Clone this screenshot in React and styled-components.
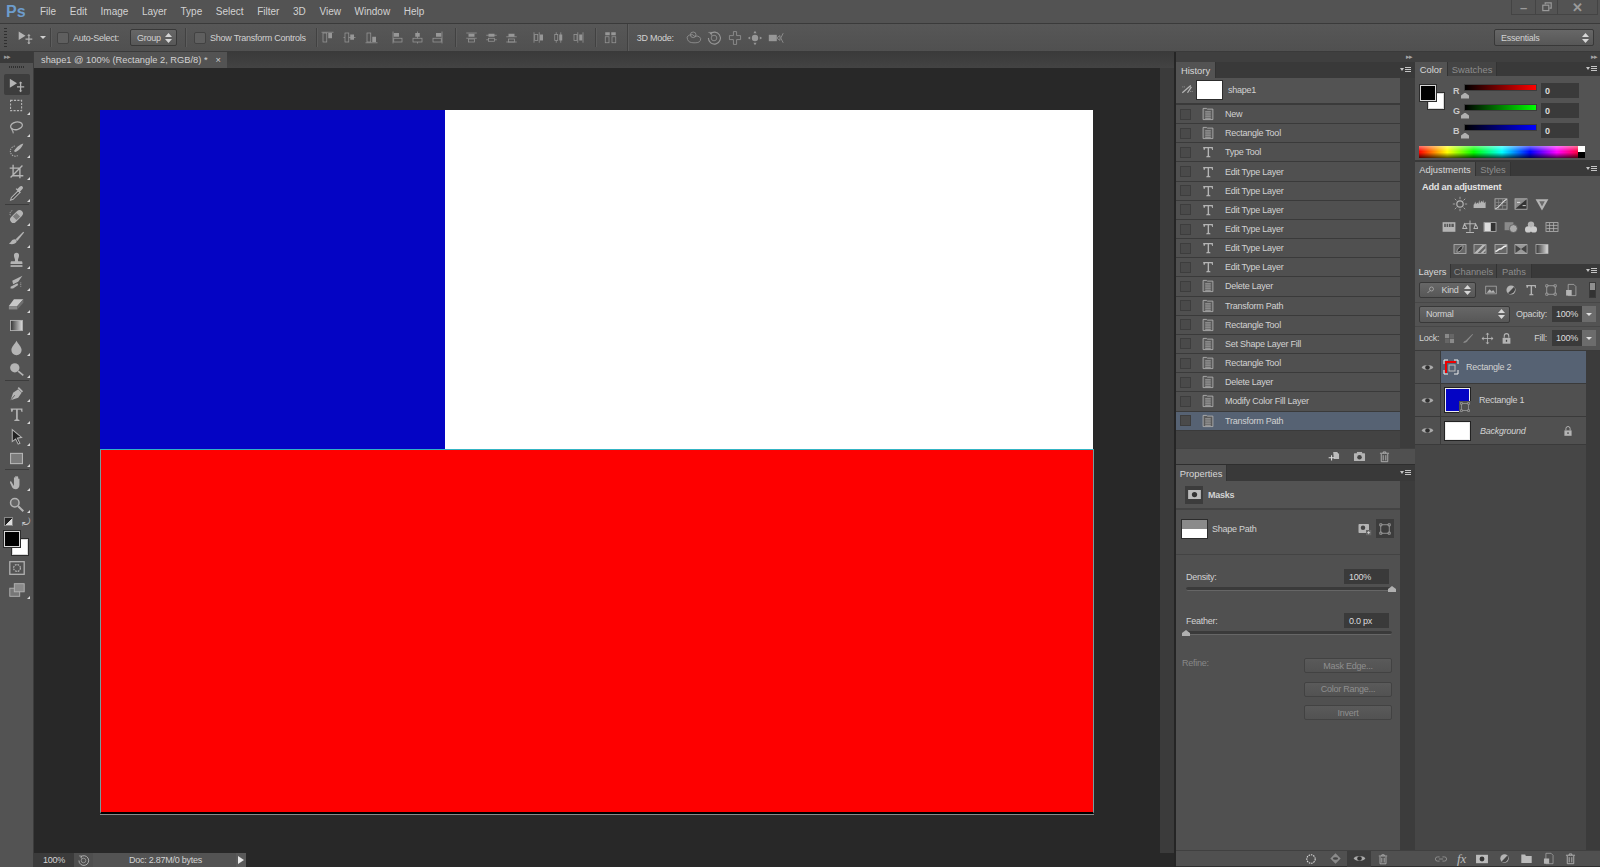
import React from 'react';
import styled, { createGlobalStyle } from 'styled-components';

const GlobalStyle = createGlobalStyle`
  html, body { margin: 0; padding: 0; height: 100%; overflow: hidden; background: #282828; }
  body { font-family: "Liberation Sans", Arial, sans-serif; font-size: 9px; letter-spacing: -0.25px; color: #d2d2d2; }
  * { box-sizing: border-box; }
`;

const S = '#b4b4b4';

// drawings, all on a 20x20 grid
const ICONS = {
  move: <><path d="M2 3l8 5-8 5z" fill={S} /><path d="M14 7v10M10 12h8" stroke={S} strokeWidth="1.4" fill="none" /><path d="M14 6l2 2h-4zM14 18l2-2h-4z" fill={S} /></>,
  marquee: <rect x="3" y="4" width="13" height="12" fill="none" stroke={S} strokeWidth="1.3" strokeDasharray="2.5 1.5" />,
  lasso: <><ellipse cx="10" cy="8" rx="7" ry="4.5" transform="rotate(-12 10 8)" fill="none" stroke={S} strokeWidth="1.5" /><path d="M5 11c-2 3 2 2 1 6" fill="none" stroke={S} strokeWidth="1.3" /></>,
  quick: <><path d="M8 6a6 6 0 1 0 4 11" fill="none" stroke={S} strokeWidth="1.2" strokeDasharray="1.5 1.2" /><path d="M7 12c2-4 7-8 11-9-1 4-5 8-9 10z" fill={S} /></>,
  crop: <path d="M6 2v13h12M2 6h12v12M3 17L17 3" fill="none" stroke={S} strokeWidth="1.6" />,
  dropper: <><path d="M4 16l8-8 2 2-8 8-3 1z" fill="#444" stroke={S} strokeWidth="1.2" /><path d="M11 6l3-3c2-2 5 1 3 3l-3 3 1 1-1 1-5-5 1-1z" fill={S} /></>,
  heal: <><g transform="rotate(-45 10 10)"><rect x="1" y="6" width="18" height="8" rx="4" fill={S} /><rect x="7" y="7" width="6" height="6" fill="#7c7c7c" /></g><path d="M5 3a4 4 0 0 0-2 6" fill="none" stroke={S} strokeDasharray="1.5 1" /></>,
  brush: <><path d="M9 11L18 2l1 1-8 10z" fill={S} /><path d="M8 11c3 0 3 4 0 5-2 1-5 1-7 0 3-1 3-5 7-5z" fill={S} /></>,
  stamp: <><path d="M7 4a3 3 0 0 1 6 0c0 3-2 4-1 7h4c1 0 1 2 1 3H3c0-1 0-3 1-3h4c1-3-1-4-1-7z" fill={S} /><rect x="3" y="15.5" width="14" height="2" fill={S} /></>,
  histbrush: <><path d="M5 8l12-6-5 7-6 3z" fill={S} /><path d="M3 15l8-4 1 2-6 4H3z" fill={S} /><path d="M15 10v6" stroke={S} strokeDasharray="1 1" /></>,
  eraser: <><path d="M7 5h11l-7 8H1z" fill="#c8c8c8" /><path d="M1 13h10v4H1z" fill="#8a8a8a" /><path d="M11 13l7-8v4l-7 8z" fill="#6f6f6f" /></>,
  gradient: <><defs><linearGradient id="gr"><stop offset="0" stopColor="#333" /><stop offset="1" stopColor="#ddd" /></linearGradient></defs><rect x="3" y="4" width="14" height="12" fill="url(#gr)" stroke={S} /></>,
  blur: <path d="M10 2c2 4 6 7 6 11a6 6 0 0 1-12 0c0-4 4-7 6-11z" fill={S} />,
  dodge: <><circle cx="8" cy="8" r="5.5" fill={S} /><path d="M12 12l6 5" stroke={S} strokeWidth="2" /></>,
  pen: <><path d="M3 18l3-9 6-4 4 4-4 6z" fill={S} /><path d="M12 3l5 5" stroke={S} strokeWidth="2" /><path d="M3 18l5-6" stroke="#555" /></>,
  type: <path d="M3 3h14v4h-1l-1-2.5h-3.5V15.500l2 1v1H7.500v-1l2-1V4.500H6L5 7H4z" fill={S} />,
  pathsel: <path d="M5 2l11 9-5 1 3 6-2 1-3-6-4 3z" fill="#222" stroke={S} strokeWidth="1.2" />,
  shape: <rect x="3" y="4" width="14" height="12" fill="#7b7b7b" stroke={S} strokeWidth="1.3" />,
  hand: <path d="M4 9l3 5V4.500c0-1 1.500-1 1.500 0V9V3c0-1 1.800-1 1.800 0v6V3.500c0-1 1.700-1 1.700 0V10V6c0-1 1.500-1 1.500 0v7c0 3-2 5-4.500 5-2 0-3-.5-4-2L2.500 10.500C2 9 3 8 4 9z" fill={S} />,
  zoom: <><circle cx="8" cy="8" r="5" fill="#666" stroke={S} strokeWidth="1.8" /><path d="M12 12l6 6" stroke={S} strokeWidth="2.4" /></>,
  quickmask: <><rect x="2" y="3" width="16" height="14" fill="none" stroke={S} strokeWidth="1.4" /><circle cx="10" cy="10" r="3.8" fill="none" stroke={S} strokeWidth="1.3" strokeDasharray="2 1" /></>,
  screen: <><rect x="2" y="8" width="11" height="9" fill="#777" stroke={S} /><rect x="7" y="3" width="11" height="9" fill="#8a8a8a" stroke={S} /></>,
  doc: <><path d="M3 2h5l1 1h8v15H3z" fill="#5a5a5a" stroke={S} strokeWidth="1.2" /><path d="M6 7h8M6 10h8M6 13h8M6 16h8" stroke={S} strokeWidth="1.3" /></>,
  snapbrush: <><path d="M2 15L15 4M10 15l6-9" stroke={S} strokeWidth="2" fill="none" /><path d="M2 6l5 0M14 13l4 0" stroke={S} strokeDasharray="1.5 1" /></>,
  alignTop: <><path d="M2 3h16" stroke={S} /><rect x="4" y="4" width="5" height="12" fill="none" stroke={S} /><rect x="11" y="4" width="5" height="7" fill={S} /></>,
  alignMid: <><path d="M2 10h16" stroke={S} /><rect x="4" y="4" width="5" height="12" fill="#535353" stroke={S} /><rect x="11" y="6" width="5" height="7" fill={S} /></>,
  alignBot: <><path d="M2 17h16" stroke={S} /><rect x="4" y="4" width="5" height="12" fill="none" stroke={S} /><rect x="11" y="9" width="5" height="7" fill={S} /></>,
  alignL: <><path d="M4 2v16" stroke={S} /><rect x="5" y="4" width="7" height="5" fill={S} /><rect x="5" y="11" width="11" height="5" fill="none" stroke={S} /></>,
  alignC: <><path d="M10 2v16" stroke={S} /><rect x="7" y="4" width="6" height="5" fill={S} /><rect x="4" y="11" width="12" height="5" fill="#535353" stroke={S} /></>,
  alignR: <><path d="M16 2v16" stroke={S} /><rect x="8" y="4" width="7" height="5" fill={S} /><rect x="4" y="11" width="11" height="5" fill="none" stroke={S} /></>,
  distTop: <><path d="M3 4h14M3 11h14" stroke={S} /><rect x="6" y="5" width="8" height="4" fill={S} /><rect x="6" y="12" width="8" height="4" fill="none" stroke={S} /></>,
  distMid: <><path d="M3 7h14M3 13h14" stroke={S} /><rect x="6" y="5" width="8" height="4" fill={S} /><rect x="6" y="11" width="8" height="4" fill="#535353" stroke={S} /></>,
  distBot: <><path d="M3 9h14M3 16h14" stroke={S} /><rect x="6" y="5" width="8" height="4" fill={S} /><rect x="6" y="12" width="8" height="4" fill="none" stroke={S} /></>,
  distL: <><path d="M4 3v14M11 3v14" stroke={S} /><rect x="5" y="6" width="4" height="8" fill="none" stroke={S} /><rect x="12" y="6" width="4" height="8" fill={S} /></>,
  distC: <><path d="M7 3v14M13 3v14" stroke={S} /><rect x="5" y="6" width="4" height="8" fill="#535353" stroke={S} /><rect x="11" y="6" width="4" height="8" fill={S} /></>,
  distR: <><path d="M9 3v14M16 3v14" stroke={S} /><rect x="4" y="6" width="4" height="8" fill="none" stroke={S} /><rect x="11" y="6" width="4" height="8" fill={S} /></>,
  autoAlign: <><rect x="3" y="3" width="6" height="4" fill={S} /><rect x="11" y="3" width="6" height="4" fill={S} /><rect x="3" y="9" width="5" height="8" fill="none" stroke={S} /><rect x="12" y="9" width="5" height="8" fill="none" stroke={S} /></>,
  d3orbit: <><path d="M2 12a5 4 0 0 1 9-4 5 4 0 0 1 7 5c-1 3-5 3-8 3-4 0-7-1-8-4z" fill="none" stroke={S} /><circle cx="9" cy="6" r="3.5" fill="none" stroke={S} /></>,
  d3roll: <><path d="M5 5a7.500 7.500 0 1 1-2 5" fill="none" stroke={S} strokeWidth="1.4" /><circle cx="10" cy="10" r="3.5" fill="none" stroke={S} /><path d="M3 3h4v4" fill="none" stroke={S} /></>,
  d3pan: <path d="M8 2h4v5h5v5h-5v6H8v-6H3V7h5z" fill="none" stroke={S} />,
  d3slide: <><circle cx="10" cy="10" r="4" fill={S} /><path d="M10 1l2 3H8zM10 19l2-3H8zM1 10l3-2v4zM19 10l-3-2v4z" fill={S} /></>,
  d3cam: <><rect x="1" y="6" width="10" height="8" fill={S} /><path d="M12 9l3-2v6l-3-2zM19 4l-3 6 3 6" fill="none" stroke={S} /></>,
  sun: <><circle cx="10" cy="10" r="4" fill="none" stroke={S} strokeWidth="1.5" /><path d="M10 1v3M10 16v3M1 10h3M16 10h3M3.500 3.500l2 2M14.500 14.500l2 2M3.500 16.500l2-2M14.500 5.500l2-2" stroke={S} /></>,
  levels: <path d="M2 15V11l1-1 1-3 1 3 2-2 1 2 1-5 1 4 2-3 1 2 1-3 1 4 2-2v8z" fill={S} />,
  curves: <><rect x="2.5" y="3.5" width="15" height="13" fill="#555" stroke={S} /><path d="M7 4v12M12 4v12M3 8h14M3 12h14" stroke="#888" /><path d="M3 16C9 14 11 7 17 4" stroke="#ddd" fill="none" strokeWidth="1.3" /></>,
  exposure: <><rect x="2.5" y="3.5" width="15" height="13" fill="#8a8a8a" stroke={S} /><path d="M3 16L17 4v12z" fill="#333" /><path d="M5 8h4M12 12h4" stroke="#eee" /></>,
  vibrance: <><path d="M2 4h16l-8 14z" fill={S} /><path d="M6.500 6.500h7L10 13z" fill="#6a6a6a" /></>,
  huesat: <><rect x="2" y="4" width="16" height="12" fill={S} /><path d="M4 6h2v4H4zM7 6h2v4H7zM10 6h2v4h-2zM13 6h3v4h-3z" fill="#555" /></>,
  balance: <path d="M10 2v14M5 17h10M3 6h14M3 6l-2 6h5zM17 6l-2 6h5z" fill="none" stroke={S} strokeWidth="1.3" />,
  bw: <><rect x="2.5" y="4.5" width="15" height="11" fill="#333" stroke={S} /><rect x="3" y="5" width="8" height="10" fill="#ddd" /></>,
  photo: <><rect x="2" y="4" width="11" height="10" fill="#8a8a8a" /><circle cx="13" cy="12" r="5" fill="#aaa" stroke="#555" /></>,
  mixer: <><circle cx="10" cy="7" r="4" fill={S} /><circle cx="6.5" cy="13" r="4" fill="#ccc" /><circle cx="13.5" cy="13" r="4" fill="#ccc" /></>,
  table: <><rect x="2.5" y="4.5" width="15" height="11" fill="none" stroke={S} /><path d="M3 8h14M3 12h14M7 5v10M12 5v10" stroke={S} /></>,
  invert: <><rect x="2.5" y="4.5" width="15" height="11" fill="#666" stroke={S} /><path d="M6 14c1-6 5-8 8-8-1 5-4 8-8 8z" fill="#333" stroke={S} /></>,
  poster: <><rect x="2.5" y="4.5" width="15" height="11" fill="#666" stroke={S} /><path d="M3 15L13 5h4L7 15zM11 15l6-6v3l-3 3z" fill="#bbb" /></>,
  thresh: <><rect x="2.5" y="4.5" width="15" height="11" fill="#666" stroke={S} /><path d="M3 13c3 0 3-3 6-3s2-3 8-4" fill="none" stroke="#eee" strokeWidth="2" /></>,
  selective: <><rect x="2.5" y="4.5" width="15" height="11" fill="#999" stroke={S} /><path d="M3 5l7 5-7 5zM17 5l-7 5 7 5z" fill="#444" /></>,
  gradmap: <rect x="2.5" y="4.5" width="15" height="11" fill="url(#gr)" stroke={S} />,
  search: <><circle cx="11" cy="8" r="4" fill="none" stroke={S} strokeWidth="1.4" /><path d="M8 11l-5 5" stroke={S} strokeWidth="1.6" /></>,
  image: <><rect x="2.5" y="4.5" width="15" height="11" fill="none" stroke={S} /><path d="M4 14l4-5 3 3 2-2 3 4z" fill={S} /></>,
  adjust: <><circle cx="10" cy="10" r="6.5" fill={S} /><path d="M14.500 5.500a6.500 6.500 0 0 1-9 9z" fill="#444" /></>,
  pathframe: <><rect x="4" y="4" width="12" height="12" fill="none" stroke={S} /><path d="M2.500 2.500h3v3h-3zM14.500 2.500h3v3h-3zM2.500 14.500h3v3h-3zM14.500 14.500h3v3h-3z" fill="#444" stroke={S} /></>,
  smart: <><path d="M6 2h8l3 3v13H6z" fill="none" stroke={S} /><rect x="3" y="10" width="8" height="8" fill={S} /></>,
  grid: <><rect x="3" y="3" width="6.5" height="6.5" fill="#8a8a8a" /><rect x="10.5" y="10.5" width="6.5" height="6.5" fill="#8a8a8a" /><rect x="10.5" y="3" width="6.5" height="6.5" fill="#666" /><rect x="3" y="10.5" width="6.5" height="6.5" fill="#666" /></>,
  lockbrush: <path d="M2 17c1-4 4-3 5-5l9-9 1 1-8 9c-1 2-3 4-7 4z" fill="#8a8a8a" />,
  lockmove: <><path d="M10 2v16M2 10h16" stroke={S} strokeWidth="1.3" /><path d="M10 1l3 3H7zM10 19l3-3H7zM1 10l3-3v6zM19 10l-3-3v6z" fill={S} /></>,
  lock: <><rect x="4" y="9" width="12" height="9" fill={S} /><path d="M6.500 9V6a3.500 3.500 0 0 1 7 0v3" fill="none" stroke={S} strokeWidth="1.6" /><rect x="9" y="12" width="2" height="3" fill="#444" /></>,
  eye: <><path d="M1 10c3-5 15-5 18 0-3 5-15 5-18 0z" fill="#aaa" /><circle cx="10" cy="10" r="3.5" fill="#2e2e2e" /></>,
  newdoc: <><path d="M8 3h9v11H9" fill="#bbb" /><path d="M1 12h9M5.500 8v8" stroke="#ddd" strokeWidth="1.6" /><path d="M14 3h3v3z" fill="#444" /></>,
  camera: <><rect x="1.5" y="5" width="17" height="12" rx="1" fill={S} /><rect x="6" y="3" width="8" height="3" fill={S} /><circle cx="10" cy="11" r="3.5" fill="#444" /></>,
  trash: <path d="M3 5h14M8 5V3h4v2M5 6v12h10V6M8 8v8M12 8v8" fill="none" stroke={S} strokeWidth="1.4" />,
  maskadd: <><rect x="2" y="4" width="14" height="12" rx="1" fill={S} /><circle cx="8" cy="9" r="3" fill="#444" /><rect x="12" y="12" width="7" height="7" fill="#666" /><path d="M13.500 15.500h4M15.500 13.500v4" stroke="#ddd" /></>,
  mask: <><rect x="1.5" y="4" width="17" height="12" fill="#bbb" /><circle cx="10" cy="10" r="3.5" fill="#333" /></>,
  dashcircle: <circle cx="10" cy="10" r="7" fill="none" stroke="#ddd" strokeWidth="1.8" strokeDasharray="2.5 1.5" />,
  diamondeye: <><path d="M10 2l8 8-8 8-8-8z" fill="#8a8a8a" /><ellipse cx="10" cy="10" rx="4" ry="2" fill="#444" /></>,
  link: <path d="M8 7H5a3 3 0 0 0 0 6h3M12 7h3a3 3 0 0 1 0 6h-3M7 10h6" fill="none" stroke="#8c8c8c" strokeWidth="1.4" />,
  folder: <path d="M2 4h6l1 2h9v11H2z" fill="#bbb" />,
  restore: <><rect x="3" y="7" width="10" height="9" fill="none" stroke="#9a9a9a" strokeWidth="2" /><path d="M7 6V3h10v9h-3" fill="none" stroke="#9a9a9a" strokeWidth="2" /></>,
};

const IconSvg = styled.svg`
  display: block;
  flex: none;
`;

const Icon = ({ name, size = 16, className }) => (
  <IconSvg viewBox="0 0 20 20" width={size} height={size} className={className}>{ICONS[name]}</IconSvg>
);

const Page = styled.div`
  width: 1600px;
  height: 867px;
  display: flex;
  flex-direction: column;
  background: #535353;
  overflow: hidden;
`;

const Spacer = styled.span`
  flex: none;
  width: ${p => p.$w}px;
`;

const Grow = styled.div`
  flex: 1;
`;

/* ---------- title + options ---------- */

const MenuBar = styled.div`
  height: 24px;
  flex: none;
  display: flex;
  align-items: center;
  background: #535353;
  border-bottom: 1px solid #3a3a3a;
`;

const Logo = styled.div`
  width: 40px;
  padding-left: 6px;
  font-size: 16px;
  font-weight: 700;
  letter-spacing: 0;
  color: #6d9ccc;
  line-height: 22px;
`;

const MenuList = styled.div`
  display: flex;
  gap: 13.6px;
  flex: 1;
  font-size: 10px;
  letter-spacing: 0;
`;

const WinButtons = styled.div`
  align-self: flex-start;
  display: flex;
  height: 15px;
  margin-right: 2px;
  border: 1px solid #444;
  border-top: 0;
`;

const WinButton = styled.div`
  width: ${p => p.$w}px;
  display: flex;
  align-items: center;
  justify-content: center;
  color: #9a9a9a;
  font-size: 13px;
  font-weight: 700;
  & + & { border-left: 1px solid #444; }
`;

const OptionsBar = styled.div`
  height: 28px;
  flex: none;
  display: flex;
  align-items: center;
  background: linear-gradient(#575757, #505050);
  border-bottom: 1px solid #3a3a3a;
`;

const Grip = styled.div`
  width: 3px;
  height: 19px;
  margin: 0 10px 0 4px;
  background: repeating-linear-gradient(#2f2f2f 0 1px, transparent 1px 3px);
`;

const Caret = styled.div`
  width: 0;
  height: 0;
  border: 3px solid transparent;
  border-top: 3px solid #cfcfcf;
  border-bottom: 0;
  margin-right: 4px;
`;

const Sep = styled.div`
  width: 1px;
  height: ${p => p.$h || 19}px;
  background: #414141;
  box-shadow: 1px 0 #5d5d5d;
  margin: 0 ${p => p.$r}px 0 ${p => p.$l}px;
`;

const Check = styled.div`
  width: 12px;
  height: 12px;
  flex: none;
  border-radius: 2px;
  background: #5f5f5f;
  border: 1px solid #424242;
  margin-right: 4px;
`;

const Select = styled.div`
  width: ${p => p.$w}px;
  height: ${p => p.$h || 17}px;
  flex: none;
  display: flex;
  align-items: center;
  justify-content: space-between;
  padding: 0 4px 0 6px;
  border: 1px solid #383838;
  border-radius: 2px;
  background: linear-gradient(#676767, #575757);
  margin: ${p => p.$m || 0};
`;

const Updown = () => (
  <svg width="7" height="10" viewBox="0 0 7 10"><path d="M3.5 0L7 4H0zM3.5 10L0 6h7z" fill="#d6d6d6" /></svg>
);

const OptIcon = styled(Icon)`
  margin-right: ${p => p.$r ?? 4}px;
  opacity: ${p => p.$dim ? 0.7 : 1};
`;

/* ---------- main area ---------- */

const Main = styled.div`
  flex: 1;
  display: flex;
  min-height: 0;
`;

const Tools = styled.div`
  width: 34px;
  flex: none;
  background: #535353;
  border-right: 1px solid #3c3c3c;
  display: flex;
  flex-direction: column;
  align-items: center;
`;

const ToolsHead = styled.div`
  width: 100%;
  height: 11px;
  background: #3a3a3a;
  color: #9a9a9a;
  font-size: 7px;
  line-height: 10px;
  padding-left: 4px;
  letter-spacing: -1px;
`;

const ToolGrip = styled.div`
  width: 16px;
  height: 2px;
  margin: 3px 0 6px;
  background: repeating-linear-gradient(90deg, #2f2f2f 0 1px, transparent 1px 2px);
`;

const Tool = styled.div`
  width: 26px;
  height: ${p => p.$active ? 21 : 21.75}px;
  flex: none;
  position: relative;
  display: flex;
  align-items: center;
  justify-content: center;
  border-radius: 2px;
  background: ${p => p.$active ? '#3d3d3d' : 'transparent'};
  &::after {
    content: '';
    display: ${p => p.$active || p.$plain ? 'none' : 'block'};
    position: absolute;
    right: 0;
    bottom: 2px;
    border-left: 3px solid transparent;
    border-bottom: 3px solid #d8d8d8;
  }
`;

const ToolSep = styled.div`
  width: 24px;
  height: 1px;
  margin: 0 0 1.25px;
  background: #3c3c3c;
  flex: none;
`;

const MiniColors = styled.div`
  width: 26px;
  display: flex;
  justify-content: space-between;
  margin-top: 2px;
  color: #c4c4c4;
  font-size: 10px;
  line-height: 10px;
`;

const ColorPair = styled.div`
  position: relative;
  width: ${p => p.$w}px;
  height: ${p => p.$h}px;
  flex: none;
  margin: ${p => p.$m};
`;

const Swatch = styled.div`
  position: absolute;
  width: 16px;
  height: 16px;
  left: ${p => p.$x}px;
  top: ${p => p.$y}px;
  background: ${p => p.$c};
  border: 1px solid #d8d8d8;
  outline: 1px solid #2c2c2c;
`;

const MiniSwatch = styled.div`
  width: 9px;
  height: 9px;
  background: linear-gradient(135deg, #222 50%, #ddd 50%);
  border: 1px solid #888;
`;

const Doc = styled.div`
  flex: 1;
  min-width: 0;
  display: flex;
  flex-direction: column;
  background: #282828;
`;

const TabStrip = styled.div`
  height: 16px;
  flex: none;
  background: linear-gradient(#3a3a3a, #434343);
`;

const DocTab = styled.div`
  width: 193px;
  height: 16px;
  display: flex;
  align-items: center;
  justify-content: space-between;
  padding: 0 6px 0 7px;
  background: #535353;
  font-size: 9.3px;
  letter-spacing: 0;
  white-space: nowrap;
`;

const CanvasRow = styled.div`
  flex: 1;
  min-height: 0;
  display: flex;
`;

const CanvasArea = styled.div`
  flex: 1;
  min-width: 0;
  padding: 42px 0 0 66px;
`;

const Scroll = styled.div`
  width: 14px;
  flex: none;
  background: #3b3b3b;
`;

const Artboard = styled.div`
  width: 994px;
  height: 704px;
  display: flex;
  flex-direction: column;
`;

const TopBand = styled.div`
  height: 339px;
  flex: none;
  display: flex;
`;

const Blue = styled.div`
  width: 345px;
  background: #0404c4;
`;

const White = styled.div`
  width: 648px;
  background: #fff;
`;

const Red = styled.div`
  flex: 1;
  background: #fe0000;
  border: 1px solid #7a9a9a;
  border-top-color: #34b4c4;
  border-bottom: 2px solid #000;
  box-shadow: 0 1px #8a8a8a;
`;

const Status = styled.div`
  height: 14px;
  flex: none;
  display: flex;
  align-items: center;
  background: #3b3b3b;
`;

const Zoom = styled.div`
  width: 40px;
  padding-left: 9px;
`;

const StatusIcon = styled.div`
  width: 19px;
  height: 14px;
  display: flex;
  align-items: center;
  justify-content: center;
  background: #4e4e4e;
`;

const DocInfo = styled.div`
  width: 143px;
  height: 14px;
  padding-left: 36px;
  line-height: 14px;
  background: #535353;
`;

const StatusNext = styled.div`
  width: 10px;
  height: 14px;
  display: flex;
  align-items: center;
  justify-content: center;
  background: #5a5a5a;
  &::before {
    content: '';
    border-left: 6px solid #e8e8e8;
    border-top: 4px solid transparent;
    border-bottom: 4px solid transparent;
  }
`;

const StatusFill = styled.div`
  flex: 1;
  height: 14px;
  background: #282828;
`;

/* ---------- panel docks ---------- */

const Dock = styled.div`
  width: ${p => p.$w}px;
  flex: none;
  display: flex;
  flex-direction: column;
  background: #3c3c3c;
  border-left: ${p => p.$line ? '2px solid #252525' : '0'};
`;

const DockHead = styled.div`
  height: 10px;
  flex: none;
  display: flex;
  justify-content: flex-end;
  align-items: center;
  padding-right: 3px;
  background: #3f3f3f;
  color: #a5a5a5;
  font-size: 7px;
  letter-spacing: -1px;
`;

const TabBar = styled.div`
  height: ${p => p.$h || 16}px;
  flex: none;
  display: flex;
  align-items: stretch;
  background: #393939;
  padding-top: ${p => p.$pt || 0}px;
`;

const Tab = styled.div`
  width: ${p => p.$w}px;
  display: flex;
  align-items: center;
  justify-content: center;
  font-size: 9.4px;
  letter-spacing: 0;
  color: ${p => p.$on ? '#d8d8d8' : '#8c8c8c'};
  background: ${p => p.$on ? '#535353' : '#444'};
  border-right: 1px solid #333;
`;

const PanelMenu = styled.div`
  margin-left: auto;
  width: 11px;
  margin-right: ${p => p.$r || 3}px;
  align-self: center;
  height: 6px;
  background: repeating-linear-gradient(#c4c4c4 0 1px, transparent 1px 2px) right / 6px 100% no-repeat;
  &::before {
    content: '';
    display: block;
    width: 0;
    border: 2px solid transparent;
    border-top: 3px solid #c4c4c4;
    margin-top: 1px;
  }
`;

const HistoryBody = styled.div`
  height: 370px;
  flex: none;
  width: 224px;
  display: flex;
  flex-direction: column;
  background: #434343;
`;

const Snapshot = styled.div`
  height: 27px;
  flex: none;
  display: flex;
  align-items: center;
  padding: 0 0 2px 5px;
  background: #535353;
  border-bottom: 2px solid #3a3a3a;
`;

const SnapThumb = styled.div`
  width: 27px;
  height: 20px;
  margin: 0 5px 0 2px;
  background: #fff;
  border: 1px solid #2c2c2c;
`;

const HistRow = styled.div`
  height: 19.17px;
  flex: none;
  display: flex;
  align-items: center;
  padding-left: 4px;
  border-bottom: 1px solid #3a3a3a;
  background: ${p => p.$on ? '#566273' : '#505050'};
`;

const RowCheck = styled.div`
  width: 11px;
  height: 11px;
  margin-right: 10px;
  background: #4a4a4a;
  border: 1px solid #3d3d3d;
`;

const RowIcon = styled(Icon)`
  margin-right: 10px;
`;

const PanelFoot = styled.div`
  height: 17px;
  flex: none;
  display: flex;
  align-items: center;
  justify-content: flex-end;
  gap: ${p => p.$gap ?? 13}px;
  padding-right: ${p => p.$r || 0}px;
  background: #505050;
  border-top: 1px solid #404040;
  border-bottom: 1px solid #2e2e2e;
`;

const FootCell = styled.div`
  width: 24px;
  height: 16px;
  display: flex;
  align-items: center;
  justify-content: center;
  background: ${p => p.$on ? '#3d3d3d' : 'transparent'};
`;

const Fx = styled.span`
  font-family: "Liberation Serif", serif;
  font-style: italic;
  font-size: 13px;
  color: #bbb;
`;

const PropBody = styled.div`
  flex: 1;
  min-height: 0;
  width: 224px;
  display: flex;
  flex-direction: column;
  background: #505050;
`;

const MaskHead = styled.div`
  height: 29px;
  flex: none;
  display: flex;
  align-items: center;
  gap: 5px;
  padding-left: 9px;
  border-bottom: 2px solid #434343;
  font-weight: 700;
  background: #535353;
`;

const MaskBtn = styled.div`
  width: 18px;
  height: 18px;
  display: flex;
  align-items: center;
  justify-content: center;
  background: #3c3c3c;
`;

const ShapeRow = styled.div`
  height: 45px;
  flex: none;
  display: flex;
  align-items: center;
  padding: 0 6px 7px 5px;
  border-bottom: 1px solid #434343;
`;

const MaskThumb = styled.div`
  width: 27px;
  height: 20px;
  margin-right: 4px;
  flex: none;
  border: 1px solid #2c2c2c;
  background: linear-gradient(#8a8a8a 50%, #fff 50%);
`;

const PathBtn = styled.div`
  width: 18px;
  height: 19px;
  margin-left: 4px;
  display: flex;
  align-items: center;
  justify-content: center;
  background: #3c3c3c;
`;

const FieldHead = styled.div`
  display: flex;
  align-items: center;
  justify-content: space-between;
  padding: 0 11px 0 10px;
  margin-top: ${p => p.$top}px;
`;

const ValueBox = styled.div`
  width: ${p => p.$w || 45}px;
  height: ${p => p.$h || 15}px;
  display: flex;
  align-items: center;
  justify-content: ${p => p.$end ? 'space-between' : 'flex-start'};
  padding-left: ${p => p.$pl || 5}px;
  background: #3a3a3a;
  color: #dcdcdc;
  flex: none;
`;

const Track = styled.div`
  position: relative;
  height: 4px;
  margin: 3px 8px 0 10px;
  background: #3a3a3a;
  border-bottom: 1px solid #666;
  border-radius: 2px;
`;

const Thumb = styled.div`
  position: absolute;
  top: ${p => p.$top ?? -2}px;
  ${p => p.$right ? 'right: -4px;' : 'left: -4px;'}
  width: 8px;
  height: 6px;
  background: #b0b0b0;
  clip-path: polygon(50% 0, 100% 50%, 100% 100%, 0 100%, 0 50%);
`;

const RefineRow = styled.div`
  display: flex;
  justify-content: space-between;
  padding: 0 8px 0 6px;
  margin-top: 23px;
  color: #888;
`;

const ButtonStack = styled.div`
  width: 88px;
  display: flex;
  flex-direction: column;
  gap: 8.5px;
`;

const DimButton = styled.div`
  height: 15px;
  display: flex;
  align-items: center;
  justify-content: center;
  color: #8f8f8f;
  background: linear-gradient(#5a5a5a, #525252);
  border: 1px solid #424242;
  border-radius: 2px;
`;

const ColorPanel = styled.div`
  height: 84px;
  flex: none;
  display: flex;
  flex-direction: column;
  background: #535353;
  padding: 7px 15px 0 5px;
`;

const ColorTop = styled.div`
  display: flex;
  height: 55px;
`;

const Sliders = styled.div`
  flex: 1;
  padding-left: 7px;
  display: flex;
  flex-direction: column;
  gap: 5px;
`;

const SliderRow = styled.div`
  height: 15px;
  display: flex;
  align-items: center;
  font-weight: 700;
  color: #c8c8c8;
`;

const Channel = styled.div`
  width: 12px;
  margin-top: 1px;
`;

const RampWrap = styled.div`
  position: relative;
  width: 71px;
  height: 5px;
  margin: -7px 5px 0 0;
  background: linear-gradient(90deg, #000, ${p => p.$c});
  outline: 1px solid #3d3d3d;
`;

const Spectrum = styled.div`
  position: relative;
  height: 12px;
  width: 166px;
  margin: 8px 0 0 -1px;
  background:
    linear-gradient(rgba(255, 255, 255, .45), rgba(255, 255, 255, 0) 45%, rgba(0, 0, 0, 0) 55%, rgba(0, 0, 0, .7)),
    linear-gradient(90deg, #f00, #ff0 17%, #0f0 33%, #0ff 50%, #00f 67%, #f0f 83%, #f00);
`;

const SpecEnds = styled.div`
  position: absolute;
  right: 0;
  top: 0;
  width: 7px;
  height: 12px;
  background: linear-gradient(#fff 50%, #000 50%);
`;

const AdjPanel = styled.div`
  height: 88px;
  flex: none;
  background: #535353;
  padding-top: 6px;
`;

const AdjTitle = styled.div`
  padding-left: 7px;
  font-weight: 700;
  font-size: 9.2px;
  letter-spacing: -0.2px;
  color: #e4e4e4;
  margin-bottom: 1px;
`;

const IconLine = styled.div`
  display: flex;
  justify-content: center;
  gap: 4.5px;
  height: 22.5px;
  align-items: center;
  padding-right: 14px;
`;

const LayersPanel = styled.div`
  flex: 1;
  min-height: 0;
  display: flex;
  flex-direction: column;
  background: #535353;
`;

const LayerTool = styled.div`
  height: 24px;
  flex: none;
  display: flex;
  align-items: center;
  padding: 0 4px 1px;
  border-top: ${p => p.$line ? '1px solid #474747' : '0'};
`;

const FilterToggle = styled.div`
  width: 7px;
  height: 16px;
  margin-left: auto;
  background: linear-gradient(#8f8f8f 50%, #333 50%);
  border: 1px solid #3a3a3a;
`;

const Stepper = styled.div`
  width: 14px;
  height: 16px;
  margin-left: auto;
  display: flex;
  align-items: center;
  justify-content: center;
  background: #6c6c6c;
  &::before {
    content: '';
    border: 3px solid transparent;
    border-top: 3px solid #e0e0e0;
    border-bottom: 0;
  }
`;

const LayerBody = styled.div`
  flex: 1;
  min-height: 0;
  display: flex;
  background: #3c3c3c;
  border-top: 1px solid #3a3a3a;
`;

const LayerList = styled.div`
  flex: 1;
  display: flex;
  flex-direction: column;
  background: #464646;
`;

const LayerRow = styled.div`
  height: ${p => p.$h}px;
  flex: none;
  display: flex;
  align-items: center;
  border-bottom: 1px solid #3a3a3a;
  background: ${p => p.$bg || '#505050'};
`;

const EyeCell = styled.div`
  width: 26px;
  align-self: stretch;
  flex: none;
  display: flex;
  align-items: center;
  justify-content: center;
  border-right: 1px solid #3a3a3a;
  background: #505050;
`;

const LayerThumb = styled.div`
  position: relative;
  width: ${p => p.$w}px;
  height: ${p => p.$h}px;
  flex: none;
  margin: 0 ${p => p.$r}px 0 ${p => p.$l}px;
  background: ${p => p.$c};
  border: ${p => p.$c === 'transparent' ? '0' : '1px solid #222'};
  outline: ${p => p.$c === 'transparent' ? '0' : '1px solid #eee'};
  outline-offset: -2px;
`;

const PathBadge = styled.div`
  position: absolute;
  right: -1px;
  bottom: -1px;
  width: 12px;
  height: 12px;
  background: #505050;
`;

const LayerName = styled.div`
  font-style: ${p => p.$it ? 'italic' : 'normal'};
`;

const LayerLock = styled(Icon)`
  margin-left: auto;
  margin-right: 12px;
`;

const HISTORY = [
  ['New', 'doc'], ['Rectangle Tool', 'doc'], ['Type Tool', 'type'],
  ['Edit Type Layer', 'type'], ['Edit Type Layer', 'type'], ['Edit Type Layer', 'type'],
  ['Edit Type Layer', 'type'], ['Edit Type Layer', 'type'], ['Edit Type Layer', 'type'],
  ['Delete Layer', 'doc'], ['Transform Path', 'doc'], ['Rectangle Tool', 'doc'],
  ['Set Shape Layer Fill', 'doc'], ['Rectangle Tool', 'doc'], ['Delete Layer', 'doc'],
  ['Modify Color Fill Layer', 'doc'], ['Transform Path', 'doc'],
];

const MENUS = ['File', 'Edit', 'Image', 'Layer', 'Type', 'Select', 'Filter', '3D', 'View', 'Window', 'Help'];

const TOOL_GROUPS = [
  ['marquee', 'lasso', 'quick', 'crop', 'dropper'],
  ['heal', 'brush', 'stamp', 'histbrush', 'eraser', 'gradient', 'blur', 'dodge'],
  ['pen', 'type', 'pathsel', 'shape'],
  ['hand', 'zoom'],
];

const Slider = ({ label, color }) => (
  <SliderRow>
    <Channel>{label}</Channel>
    <RampWrap $c={color}><Thumb $top={8} /></RampWrap>
    <ValueBox $w={38} $pl={4}>0</ValueBox>
  </SliderRow>
);

const App = () => (
  <Page>
    <GlobalStyle />
    <MenuBar>
      <Logo>Ps</Logo>
      <MenuList>{MENUS.map(m => <span key={m}>{m}</span>)}</MenuList>
      <WinButtons>
        <WinButton $w={23}>–</WinButton>
        <WinButton $w={22}><Icon name="restore" size={12} /></WinButton>
        <WinButton $w={40}>✕</WinButton>
      </WinButtons>
    </MenuBar>

    <OptionsBar>
      <Grip />
      <OptIcon name="move" size={17} $r={6} />
      <Caret />
      <Sep $l={0} $r={6} />
      <Check />
      <span>Auto-Select:</span>
      <Select $w={47} $m="0 8px 0 11px">Group<Updown /></Select>
      <Sep $l={0} $r={8} />
      <Check />
      <span>Show Transform Controls</span>
      <Sep $l={10} $r={3} />
      {['alignTop', 'alignMid', 'alignBot'].map(n => <OptIcon key={n} name={n} size={15} $r={7} $dim />)}
      <Spacer $w={4} />
      {['alignL', 'alignC', 'alignR'].map(n => <OptIcon key={n} name={n} size={15} $r={5} $dim />)}
      <Sep $l={5} $r={8} />
      {['distTop', 'distMid', 'distBot'].map(n => <OptIcon key={n} name={n} size={15} $r={5} $dim />)}
      <Spacer $w={7} />
      {['distL', 'distC', 'distR'].map(n => <OptIcon key={n} name={n} size={15} $r={5} $dim />)}
      <Sep $l={4} $r={7} />
      <OptIcon name="autoAlign" size={15} $r={8} $dim />
      <Sep $l={1} $r={9} $h={27} />
      <span>3D Mode:</span>
      <Spacer $w={12} />
      {['d3orbit', 'd3roll', 'd3pan', 'd3slide', 'd3cam'].map(n => <OptIcon key={n} name={n} size={16} $r={4.5} $dim />)}
      <Grow />
      <Select $w={100} $m="0 6px 0 0">Essentials<Updown /></Select>
    </OptionsBar>

    <Main>
      <Tools>
        <ToolsHead>▸▸</ToolsHead>
        <ToolGrip />
        <Tool $active><Icon name="move" size={18} /></Tool>
        {TOOL_GROUPS.map((group, i) => (
          <React.Fragment key={i}>
            {group.map(n => <Tool key={n}><Icon name={n} size={17} /></Tool>)}
            {i < TOOL_GROUPS.length - 1 && <ToolSep />}
          </React.Fragment>
        ))}
        <MiniColors><MiniSwatch /><span>⤾</span></MiniColors>
        <ColorPair $w={26} $h={24} $m="4px 0 2px">
          <Swatch $x={8} $y={8} $c="#fff" />
          <Swatch $x={0} $y={0} $c="#000" />
        </ColorPair>
        <Tool $plain><Icon name="quickmask" size={18} /></Tool>
        <Tool><Icon name="screen" size={18} /></Tool>
      </Tools>

      <Doc>
        <TabStrip>
          <DocTab>
            <span>shape1 @ 100% (Rectangle 2, RGB/8) *</span>
            <span>×</span>
          </DocTab>
        </TabStrip>
        <CanvasRow>
          <CanvasArea>
            <Artboard>
              <TopBand><Blue /><White /></TopBand>
              <Red />
            </Artboard>
          </CanvasArea>
          <Scroll />
        </CanvasRow>
        <Status>
          <Zoom>100%</Zoom>
          <StatusIcon><Icon name="d3roll" size={13} /></StatusIcon>
          <DocInfo>Doc: 2.87M/0 bytes</DocInfo>
          <StatusNext />
          <StatusFill />
        </Status>
      </Doc>

      <Dock $w={241} $line>
        <DockHead>▸▸</DockHead>
        <TabBar>
          <Tab $w={40} $on>History</Tab>
          <PanelMenu $r={4} />
        </TabBar>
        <HistoryBody>
          <Snapshot>
            <Icon name="snapbrush" size={13} />
            <SnapThumb />
            <span>shape1</span>
          </Snapshot>
          {HISTORY.map(([label, kind], i) => (
            <HistRow key={i} $on={i === HISTORY.length - 1}>
              <RowCheck />
              <RowIcon name={kind} size={14} />
              <span>{label}</span>
            </HistRow>
          ))}
        </HistoryBody>
        <PanelFoot $gap={12} $r={24}>
          <Icon name="newdoc" size={13} />
          <Icon name="camera" size={13} />
          <Icon name="trash" size={13} />
        </PanelFoot>
        <TabBar>
          <Tab $w={51} $on>Properties</Tab>
          <PanelMenu $r={4} />
        </TabBar>
        <PropBody>
          <MaskHead>
            <MaskBtn><Icon name="mask" size={15} /></MaskBtn>
            <span>Masks</span>
          </MaskHead>
          <ShapeRow>
            <MaskThumb />
            <span>Shape Path</span>
            <Grow />
            <Icon name="maskadd" size={15} />
            <PathBtn><Icon name="pathframe" size={14} /></PathBtn>
          </ShapeRow>
          <FieldHead $top={14}><span>Density:</span><ValueBox>100%</ValueBox></FieldHead>
          <Track><Thumb $right $top={-1} /></Track>
          <FieldHead $top={22}><span>Feather:</span><ValueBox>0.0 px</ValueBox></FieldHead>
          <Track><Thumb $top={-1} /></Track>
          <RefineRow>
            <span>Refine:</span>
            <ButtonStack>
              <DimButton>Mask Edge...</DimButton>
              <DimButton>Color Range...</DimButton>
              <DimButton>Invert</DimButton>
            </ButtonStack>
          </RefineRow>
        </PropBody>
        <PanelFoot $gap={0} $r={20}>
          <FootCell><Icon name="dashcircle" size={12} /></FootCell>
          <FootCell><Icon name="diamondeye" size={13} /></FootCell>
          <FootCell $on><Icon name="eye" size={13} /></FootCell>
          <FootCell><Icon name="trash" size={12} /></FootCell>
        </PanelFoot>
      </Dock>

      <Dock $w={185}>
        <DockHead>▸▸</DockHead>
        <TabBar $h={14}>
          <Tab $w={33} $on>Color</Tab>
          <Tab $w={49}>Swatches</Tab>
          <PanelMenu />
        </TabBar>
        <ColorPanel>
          <ColorTop>
            <ColorPair $w={26} $h={26} $m="2px 0 0">
              <Swatch $x={8} $y={8} $c="#fff" />
              <Swatch $x={0} $y={0} $c="#000" />
            </ColorPair>
            <Sliders>
              <Slider label="R" color="#f00" />
              <Slider label="G" color="#0f0" />
              <Slider label="B" color="#00f" />
            </Sliders>
          </ColorTop>
          <Spectrum><SpecEnds /></Spectrum>
        </ColorPanel>
        <TabBar $h={16} $pt={2}>
          <Tab $w={61} $on>Adjustments</Tab>
          <Tab $w={35}>Styles</Tab>
          <PanelMenu />
        </TabBar>
        <AdjPanel>
          <AdjTitle>Add an adjustment</AdjTitle>
          <IconLine>
            {['sun', 'levels', 'curves', 'exposure', 'vibrance'].map(n => <Icon key={n} name={n} size={16} />)}
          </IconLine>
          <IconLine>
            {['huesat', 'balance', 'bw', 'photo', 'mixer', 'table'].map(n => <Icon key={n} name={n} size={16} />)}
          </IconLine>
          <IconLine>
            {['invert', 'poster', 'thresh', 'selective', 'gradmap'].map(n => <Icon key={n} name={n} size={16} />)}
          </IconLine>
        </AdjPanel>
        <TabBar $h={14}>
          <Tab $w={36} $on>Layers</Tab>
          <Tab $w={46}>Channels</Tab>
          <Tab $w={35}>Paths</Tab>
          <PanelMenu />
        </TabBar>
        <LayersPanel>
          <LayerTool>
            <Select $w={57} $h={16}><Icon name="search" size={10} />Kind<Updown /></Select>
            <Spacer $w={8} />
            {['image', 'adjust', 'type', 'pathframe', 'smart'].map(n => <OptIcon key={n} name={n} size={14} $r={6} />)}
            <FilterToggle />
          </LayerTool>
          <LayerTool $line>
            <Select $w={91} $h={17}>Normal<Updown /></Select>
            <Spacer $w={6} />
            <span>Opacity:</span>
            <Grow />
            <ValueBox $w={44} $h={16} $end $pl={4}>100%<Stepper /></ValueBox>
          </LayerTool>
          <LayerTool $line>
            <span>Lock:</span>
            <Spacer $w={4} />
            {['grid', 'lockbrush', 'lockmove', 'lock'].map(n => <OptIcon key={n} name={n} size={13} $r={6} />)}
            <Grow />
            <span>Fill:</span>
            <Spacer $w={5} />
            <ValueBox $w={44} $h={16} $end $pl={4}>100%<Stepper /></ValueBox>
          </LayerTool>
          <LayerBody>
            <LayerList>
              <LayerRow $h={33} $bg="#566273">
                <EyeCell><Icon name="eye" size={13} /></EyeCell>
                <LayerThumb $w={16} $h={16} $l={2} $r={7} $c="transparent">
                  <svg width="16" height="16" viewBox="0 0 16 16">
                    <path d="M1 5V1h4M11 1h4v4M15 11v4h-4M5 15H1v-4" fill="none" stroke="#eee" />
                    <path d="M3 14V3h10" fill="none" stroke="#e00" strokeWidth="2" />
                    <rect x="6" y="6" width="6" height="6" fill="none" stroke="#bbb" />
                  </svg>
                </LayerThumb>
                <LayerName>Rectangle 2</LayerName>
              </LayerRow>
              <LayerRow $h={33}>
                <EyeCell><Icon name="eye" size={13} /></EyeCell>
                <LayerThumb $w={27} $h={26} $l={3} $r={8} $c="#0404c4">
                  <PathBadge><Icon name="pathframe" size={12} /></PathBadge>
                </LayerThumb>
                <LayerName>Rectangle 1</LayerName>
              </LayerRow>
              <LayerRow $h={28}>
                <EyeCell><Icon name="eye" size={13} /></EyeCell>
                <LayerThumb $w={27} $h={20} $l={3} $r={9} $c="#fff" />
                <LayerName $it>Background</LayerName>
                <LayerLock name="lock" size={12} />
              </LayerRow>
            </LayerList>
            <Scroll />
          </LayerBody>
        </LayersPanel>
        <PanelFoot $gap={9} $r={23}>
          <Icon name="link" size={14} />
          <Fx>fx</Fx>
          <Icon name="mask" size={14} />
          <Icon name="adjust" size={13} />
          <Icon name="folder" size={13} />
          <Icon name="smart" size={13} />
          <Icon name="trash" size={13} />
        </PanelFoot>
      </Dock>
    </Main>
  </Page>
);

export default App;
